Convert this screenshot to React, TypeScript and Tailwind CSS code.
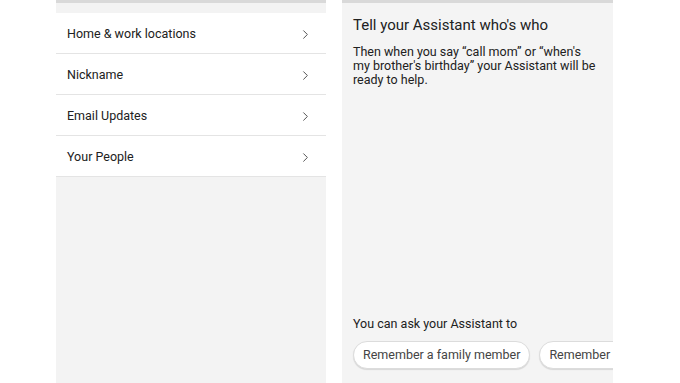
import { ChevronRight } from 'lucide-react';

const items = ['Home & work locations', 'Nickname', 'Email Updates', 'Your People'];

function SettingsList() {
  return (
    <div className="w-[270px] h-full bg-[#f3f3f3] border-t-[3px] border-[#d9d9d9] pt-[10px]">
      {items.map((label) => (
        <div
          key={label}
          className="h-[41px] bg-white border-b border-[#e4e4e4] flex items-center justify-between pl-[11px] pr-[13px] pt-[2px]"
        >
          <span className="text-[12.5px] text-[#212121]">{label}</span>
          <ChevronRight size={15} strokeWidth={1.6} className="text-[#555]" />
        </div>
      ))}
    </div>
  );
}

function PeoplePanel() {
  return (
    <div className="w-[271px] h-full bg-[#f4f4f4] border-t-[3px] border-[#d9d9d9] flex flex-col overflow-hidden">
      <div className="pl-[11px] pt-[12px] pr-[8px]">
        <h1 className="text-[15px] leading-[20px] text-[#212121]">Tell your Assistant who's who</h1>
        <p className="mt-[10px] max-w-[245px] text-[12.5px] leading-[14px] text-[#212121]">
          Then when you say “call mom” or “when's my brother's birthday” your Assistant will be ready to help.
        </p>
      </div>
      <div className="mt-auto pl-[11px] pb-[14px]">
        <p className="text-[12.5px] leading-[16px] text-[#212121]">You can ask your Assistant to</p>
        <div className="mt-[9px] flex gap-[9px] whitespace-nowrap">
          <div className="h-[28px] px-[9px] flex items-center rounded-full bg-white border border-[#dcdcdc] shadow-[0_1px_1px_rgba(0,0,0,0.12)] text-[12.5px] text-[#444]">
            Remember a family member
          </div>
          <div className="h-[28px] px-[9px] flex items-center rounded-full bg-white border border-[#dcdcdc] shadow-[0_1px_1px_rgba(0,0,0,0.12)] text-[12.5px] text-[#444]">
            Remember a friend
          </div>
        </div>
      </div>
    </div>
  );
}

export default function App() {
  return (
    <div className="w-[680px] h-[383px] bg-white flex gap-[16px] pl-[56px] font-['Roboto',sans-serif]">
      <SettingsList />
      <PeoplePanel />
    </div>
  );
}
